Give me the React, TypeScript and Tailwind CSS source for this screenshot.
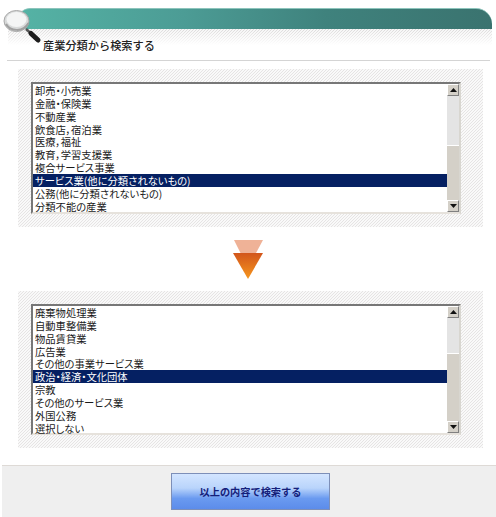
const hatch =
  'bg-[repeating-linear-gradient(135deg,#e6e4e4_0,#e6e4e4_0.707px,#f9f9f9_0.707px,#f9f9f9_2.121px)]';

const topItems = [
  '卸売・小売業',
  '金融・保険業',
  '不動産業',
  '飲食店，宿泊業',
  '医療，福祉',
  '教育，学習支援業',
  '複合サービス事業',
  'サービス業(他に分類されないもの)',
  '公務(他に分類されないもの)',
  '分類不能の産業',
];

const bottomItems = [
  '廃棄物処理業',
  '自動車整備業',
  '物品賃貸業',
  '広告業',
  'その他の事業サービス業',
  '政治・経済・文化団体',
  '宗教',
  'その他のサービス業',
  '外国公務',
  '選択しない',
];

function ScrollButton({ up }: { up?: boolean }) {
  return (
    <div className="flex h-[12px] shrink-0 items-center justify-center border-t border-l border-t-white border-l-white border-r border-b border-r-[#808080] border-b-[#808080] bg-[#d4d0c8]">
      <svg width="7" height="4" viewBox="0 0 7 4">
        <path d={up ? 'M3.5 0 L7 4 L0 4 Z' : 'M0 0 L7 0 L3.5 4 Z'} fill="#111" />
      </svg>
    </div>
  );
}

function ListBox({
  items,
  selected,
  trackH,
}: {
  items: string[];
  selected: number;
  trackH: string;
}) {
  return (
    <div className="flex h-full border-2 border-t-[#777] border-l-[#777] border-r-[#d8d6d0] border-b-[#e6e2dc] bg-white">
      <ul className="min-w-0 flex-1">
        {items.map((item, i) => (
          <li
            key={item}
            className={`h-[12.85px] whitespace-nowrap pl-[2px] text-[10.3px] leading-[13.5px] [font-feature-settings:'palt'] ${
              i === selected ? 'bg-[#052062] text-white' : 'text-[#1a1a1a]'
            }`}
          >
            {item}
          </li>
        ))}
      </ul>
      <div className="flex w-[12px] shrink-0 flex-col bg-[#e4e4e4]">
        <ScrollButton up />
        <div className={`shrink-0 ${trackH}`} />
        <div className="flex-1 border-t border-white bg-[#d4d0c8]" />
        <ScrollButton />
      </div>
    </div>
  );
}

function Panel({
  items,
  selected,
  trackH,
  height,
}: {
  items: string[];
  selected: number;
  trackH: string;
  height: string;
}) {
  return (
    <div className={`mr-[13px] ml-[18px] ${height} px-[13px] py-[13px] pr-[22px] ${hatch}`}>
      <ListBox items={items} selected={selected} trackH={trackH} />
    </div>
  );
}

export default function App() {
  return (
    <div className="h-[517px] w-[496px] overflow-hidden bg-white font-['Noto_Sans_CJK_JP','Liberation_Sans',sans-serif]">
      <div className="relative h-[61px]">
        <div className="pt-[8px] pr-[4px] pl-[18px]">
          <div className="h-[21px] rounded-tl-[12px] rounded-tr-[16px] border-t border-[#8cc4bb] bg-[linear-gradient(90deg,#55b3a5_0%,#4c9c95_35%,#3f827d_65%,#3a736f_100%)]" />
        </div>
        <div className="relative mr-[4px] ml-[8px] h-[16px] bg-[repeating-linear-gradient(135deg,#dcdada_0,#dcdada_0.707px,#f6f6f6_0.707px,#f6f6f6_2.121px)]">
          <div className="absolute inset-0 bg-[linear-gradient(180deg,rgba(255,255,255,0)_0%,rgba(255,255,255,1)_100%)]" />
        </div>
        <h1 className="relative mt-[-8px] pl-[43px] text-[11.2px] leading-[16px] font-medium text-[#222]">
          産業分類から検索する
        </h1>
        <svg className="absolute top-[9px] left-[3px]" width="42" height="36" viewBox="0 0 42 36">
          <path d="M23 20 L33 29" stroke="#555" strokeWidth="2.5" />
          <path d="M28 24.5 L35 31" stroke="#1c1c1c" strokeWidth="5" strokeLinecap="round" />
          <ellipse cx="13.5" cy="12" rx="12.5" ry="10.5" fill="#d8dada" stroke="#a8a8a8" strokeWidth="1" />
          <ellipse cx="13.5" cy="10.5" rx="10" ry="7.5" fill="#f4f5f5" />
          <path d="M3 15 C7 22 20 24 25.5 14" fill="none" stroke="#a0a0a0" strokeWidth="2" />
        </svg>
        <div className="absolute top-[60px] right-[6px] left-[7px] h-px bg-[#d4d4d4]" />
      </div>

      <div className="mt-[8px]">
        <Panel items={topItems} selected={7} trackH="h-[49px]" height="h-[158px]" />
      </div>

      <div className="flex h-[64px] items-center justify-center">
        <svg width="30" height="39" viewBox="0 0 30 39">
          <defs>
            <linearGradient id="arrow" x1="0" y1="0" x2="0" y2="1">
              <stop offset="0" stopColor="#d2561c" />
              <stop offset="1" stopColor="#f6961e" />
            </linearGradient>
          </defs>
          <path d="M1 0 L30 0 L15 28 Z" fill="#efb297" />
          <path d="M0 13 L30 13 L15 39 Z" fill="url(#arrow)" />
        </svg>
      </div>

      <Panel items={bottomItems} selected={5} trackH="h-[35px]" height="h-[157px]" />

      <div className="mt-[17px] ml-[2px] flex h-[52px] items-center justify-center border-t border-[#dedad6] bg-[#efefef]">
        <button className="mr-[-3px] flex h-[37px] w-[159px] items-center justify-center border border-[#7d8fb8] bg-[linear-gradient(180deg,#d3e5ff_0%,#b9d4fb_40%,#6a9af0_70%,#5c8cea_100%)] text-[10.2px] font-bold text-[#14207a]">
          以上の内容で検索する
        </button>
      </div>
    </div>
  );
}
